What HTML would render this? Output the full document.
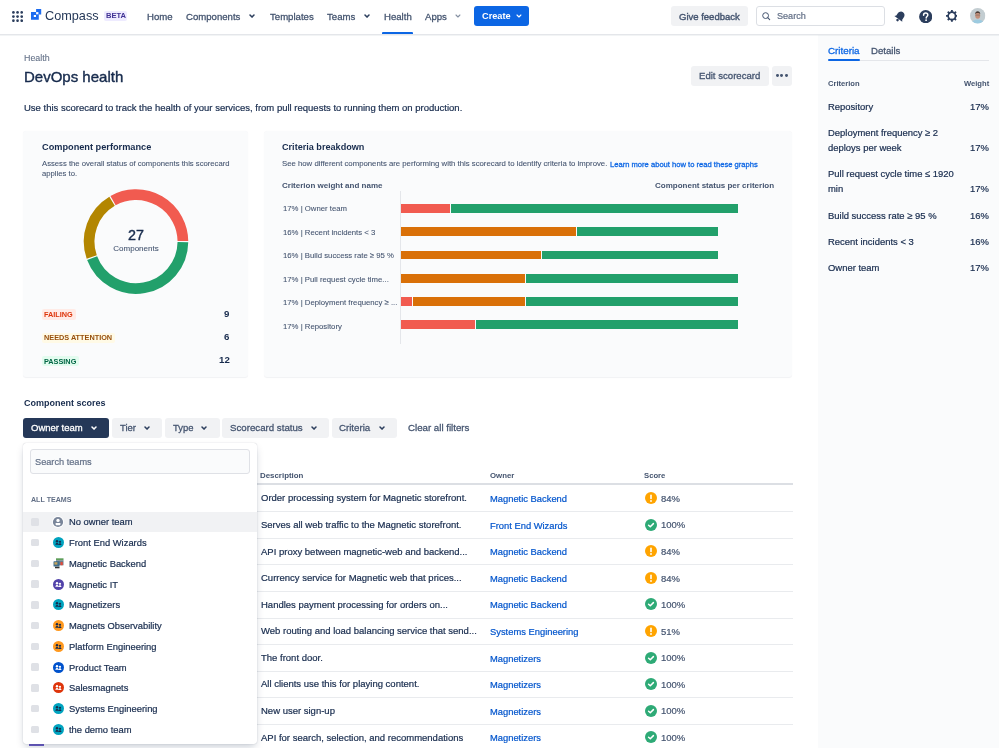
<!DOCTYPE html><html><head><meta charset="utf-8"><style>
html,body{margin:0;padding:0;}
body{width:999px;height:748px;overflow:hidden;position:relative;background:#fff;font-family:'Liberation Sans', sans-serif;}
.t{position:absolute;white-space:nowrap;line-height:1;will-change:transform;}
.r{position:absolute;}
</style></head><body>
<div class="r" style="left:818.00px;top:35.00px;width:181.00px;height:713.00px;background:#FAFBFC;"></div>
<div class="r" style="left:0.00px;top:0.00px;width:999.00px;height:34.00px;background:#fff;"></div>
<div class="r" style="left:0.00px;top:34.00px;width:999.00px;height:1.00px;background:#E4E6EA;"></div>
<div class="r" style="left:0.00px;top:35.00px;width:999.00px;height:1.00px;background:rgba(9,30,66,0.05);"></div>
<svg class="r" style="left:11.6px;top:10.9px" width="11" height="11"><circle cx="1.40" cy="1.40" r="1.35" fill="#2C3E5D"/><circle cx="1.40" cy="5.55" r="1.35" fill="#2C3E5D"/><circle cx="1.40" cy="9.70" r="1.35" fill="#2C3E5D"/><circle cx="5.55" cy="1.40" r="1.35" fill="#2C3E5D"/><circle cx="5.55" cy="5.55" r="1.35" fill="#2C3E5D"/><circle cx="5.55" cy="9.70" r="1.35" fill="#2C3E5D"/><circle cx="9.70" cy="1.40" r="1.35" fill="#2C3E5D"/><circle cx="9.70" cy="5.55" r="1.35" fill="#2C3E5D"/><circle cx="9.70" cy="9.70" r="1.35" fill="#2C3E5D"/></svg>
<svg class="r" style="left:31px;top:9px" width="11" height="11" viewBox="0 0 11 11"><path fill="#1D6CF0" fill-rule="evenodd" d="M0 3.1H7.8V10.7H0Z M2.8 6V8H5V6Z"/><path fill="#1D6CF0" fill-rule="evenodd" d="M5.1 0H10.2V5.4H5.1Z M5.1 3.1V5.4H7.8V3.1Z"/><rect x="5.1" y="3.1" width="2.2" height="2.2" fill="#fff"/></svg>
<div class="t" style="left:44.60px;top:9.65px;font-size:12.7px;color:#253858;">Compass</div>
<div class="r" style="left:103.70px;top:11.20px;width:23.50px;height:9.80px;background:#EEEBFF;border-radius:2px;"></div>
<div class="t" style="left:-184.30px;width:600px;text-align:center;top:12.47px;font-size:7.6px;color:#403294;font-weight:700;">BETA</div>
<div class="t" style="left:147.30px;top:11.97px;font-size:9.6px;color:#44546F;-webkit-text-stroke:0.28px #44546F;">Home</div>
<div class="t" style="left:185.50px;top:11.97px;font-size:9.6px;color:#44546F;-webkit-text-stroke:0.28px #44546F;">Components</div>
<svg class="r" style="left:249.40px;top:14.35px" width="6.00" height="4.10"><polyline points="1,1 3.00,3.10 5.00,1" fill="none" stroke="#2C3E5D" stroke-width="1.5" stroke-linecap="round" stroke-linejoin="round"/></svg>
<div class="t" style="left:269.80px;top:11.97px;font-size:9.6px;color:#44546F;-webkit-text-stroke:0.28px #44546F;">Templates</div>
<div class="t" style="left:327.30px;top:11.97px;font-size:9.6px;color:#44546F;-webkit-text-stroke:0.28px #44546F;">Teams</div>
<svg class="r" style="left:363.80px;top:14.35px" width="6.00" height="4.10"><polyline points="1,1 3.00,3.10 5.00,1" fill="none" stroke="#2C3E5D" stroke-width="1.5" stroke-linecap="round" stroke-linejoin="round"/></svg>
<div class="t" style="left:384.00px;top:11.97px;font-size:9.6px;color:#44546F;-webkit-text-stroke:0.28px #44546F;">Health</div>
<div class="r" style="left:382.30px;top:32.00px;width:30.70px;height:2.00px;background:#0C66E4;border-radius:1px 1px 0 0;"></div>
<div class="t" style="left:424.80px;top:11.97px;font-size:9.6px;color:#44546F;-webkit-text-stroke:0.28px #44546F;">Apps</div>
<svg class="r" style="left:455.25px;top:14.40px" width="5.90" height="4.00"><polyline points="1,1 2.95,3.00 4.90,1" fill="none" stroke="#8590A2" stroke-width="1.1" stroke-linecap="round" stroke-linejoin="round"/></svg>
<div class="r" style="left:473.80px;top:6.00px;width:55.30px;height:20.40px;background:#0C66E4;border-radius:3px;"></div>
<div class="t" style="left:481.50px;top:12.31px;font-size:9.2px;color:#fff;font-weight:700;">Create</div>
<svg class="r" style="left:516.15px;top:14.40px" width="5.90" height="4.00"><polyline points="1,1 2.95,3.00 4.90,1" fill="none" stroke="#fff" stroke-width="1.1" stroke-linecap="round" stroke-linejoin="round"/></svg>
<div class="r" style="left:671.00px;top:6.00px;width:77.00px;height:20.40px;background:#F1F2F4;border-radius:3px;"></div>
<div class="t" style="left:679.00px;top:12.06px;font-size:9.5px;color:#44546F;-webkit-text-stroke:0.4px #44546F;">Give feedback</div>
<div class="r" style="left:756.2px;top:6px;width:126.8px;height:18.4px;border:1px solid #DCDFE4;border-radius:3px;background:#fff"></div>
<svg class="r" style="left:762px;top:11.6px" width="9" height="9"><circle cx="3.6" cy="3.6" r="2.9" fill="none" stroke="#44546F" stroke-width="1"/><line x1="5.7" y1="5.7" x2="7.7" y2="7.7" stroke="#44546F" stroke-width="1.05" stroke-linecap="round"/></svg>
<div class="t" style="left:776.60px;top:12.40px;font-size:9.1px;color:#626F86;-webkit-text-stroke:0.2px #626F86;">Search</div>
<svg class="r" style="left:893px;top:10px" width="14" height="13" viewBox="0 0 14 13"><g transform="rotate(35 7 6.5)"><path d="M7 1.2c-2.3 0-3.6 1.8-3.6 4v2.6L2.2 9.4h9.6L10.6 7.8V5.2c0-2.2-1.3-4-3.6-4z" fill="#2C3E5D"/><circle cx="7" cy="10.8" r="1.3" fill="#2C3E5D"/></g></svg>
<svg class="r" style="left:918.9px;top:9.6px" width="13.4" height="13.4" viewBox="0 0 13.4 13.4"><circle cx="6.7" cy="6.7" r="6.6" fill="#2C3E5D"/><path d="M4.6 5.2c0-1.2 1-2.1 2.1-2.1s2.1.8 2.1 2c0 1.4-1.6 1.5-1.6 2.8" fill="none" stroke="#fff" stroke-width="1.5" stroke-linecap="round"/><circle cx="7.1" cy="10.2" r="0.9" fill="#fff"/></svg>
<svg class="r" style="left:945.6px;top:10.3px" width="11.8" height="11.8" viewBox="0 0 11.8 11.8"><rect x="4.95" y="0" width="1.9" height="3" rx="0.3" transform="rotate(0 5.9 5.9)" fill="#2C3E5D"/><rect x="4.95" y="0" width="1.9" height="3" rx="0.3" transform="rotate(45 5.9 5.9)" fill="#2C3E5D"/><rect x="4.95" y="0" width="1.9" height="3" rx="0.3" transform="rotate(90 5.9 5.9)" fill="#2C3E5D"/><rect x="4.95" y="0" width="1.9" height="3" rx="0.3" transform="rotate(135 5.9 5.9)" fill="#2C3E5D"/><rect x="4.95" y="0" width="1.9" height="3" rx="0.3" transform="rotate(180 5.9 5.9)" fill="#2C3E5D"/><rect x="4.95" y="0" width="1.9" height="3" rx="0.3" transform="rotate(225 5.9 5.9)" fill="#2C3E5D"/><rect x="4.95" y="0" width="1.9" height="3" rx="0.3" transform="rotate(270 5.9 5.9)" fill="#2C3E5D"/><rect x="4.95" y="0" width="1.9" height="3" rx="0.3" transform="rotate(315 5.9 5.9)" fill="#2C3E5D"/><circle cx="5.9" cy="5.9" r="3.75" fill="none" stroke="#2C3E5D" stroke-width="1.65"/></svg>
<svg class="r" style="left:970.2px;top:8.4px" width="15.4" height="15.4" viewBox="0 0 16 16"><defs><clipPath id="av"><circle cx="8" cy="8" r="8"/></clipPath></defs><g clip-path="url(#av)"><rect width="16" height="16" fill="#C3CDD1"/><ellipse cx="8" cy="16.5" rx="6.5" ry="4.5" fill="#9DCBE0"/><ellipse cx="8" cy="7.8" rx="2.6" ry="3.3" fill="#C4907A"/><path d="M5.3 6.6c0-2.3 1.2-3.3 2.7-3.3s2.7 1 2.7 3.3c-.6-1-1.5-1.4-2.7-1.4s-2.1.4-2.7 1.4z" fill="#4A3A32"/><rect x="5.6" y="7" width="4.8" height="0.7" fill="#555" opacity="0.6"/></g></svg>
<div class="t" style="left:23.60px;top:53.77px;font-size:8.9px;color:#626F86;-webkit-text-stroke:0.08px #626F86;">Health</div>
<div class="t" style="left:23.60px;top:68.60px;font-size:15px;color:#172B4D;-webkit-text-stroke:0.4px #172B4D;">DevOps health</div>
<div class="r" style="left:691.30px;top:65.80px;width:77.30px;height:20.30px;background:#F1F2F4;border-radius:3px;"></div>
<div class="t" style="left:699.20px;top:71.17px;font-size:9.6px;color:#44546F;-webkit-text-stroke:0.28px #44546F;">Edit scorecard</div>
<div class="r" style="left:771.60px;top:65.80px;width:20.30px;height:20.30px;background:#F1F2F4;border-radius:3px;"></div>
<div class="r" style="left:775.90px;top:74px;width:2.9px;height:2.9px;border-radius:50%;background:#44546F"></div>
<div class="r" style="left:780.40px;top:74px;width:2.9px;height:2.9px;border-radius:50%;background:#44546F"></div>
<div class="r" style="left:784.90px;top:74px;width:2.9px;height:2.9px;border-radius:50%;background:#44546F"></div>
<div class="t" style="left:23.50px;top:103.36px;font-size:9.5px;color:#172B4D;-webkit-text-stroke:0.2px #172B4D;">Use this scorecard to track the health of your services, from pull requests to running them on production.</div>
<div class="r" style="left:23.00px;top:130.50px;width:225.00px;height:246.30px;background:#FAFBFC;border-radius:3px;box-shadow:0 0.5px 1px rgba(9,30,66,0.06);"></div>
<div class="t" style="left:41.70px;top:142.81px;font-size:9.2px;color:#172B4D;font-weight:700;">Component performance</div>
<div class="t" style="left:41.70px;top:160.08px;font-size:7.7px;color:#44546F;-webkit-text-stroke:0.08px #44546F;">Assess the overall status of components this scorecard</div>
<div class="t" style="left:41.70px;top:169.88px;font-size:7.7px;color:#44546F;-webkit-text-stroke:0.08px #44546F;">applies to.</div>
<svg class="r" style="left:0;top:0" width="260" height="380"><path d="M182.90 242.17 A46.9 46.9 0 0 1 92.13 258.18" fill="none" stroke="#22A06B" stroke-width="10.7"/><path d="M91.74 257.10 A46.9 46.9 0 0 1 112.06 201.27" fill="none" stroke="#B38600" stroke-width="10.7"/><path d="M113.05 200.70 A46.9 46.9 0 0 1 182.90 241.03" fill="none" stroke="#F15B50" stroke-width="10.7"/></svg>
<div class="t" style="left:-164.00px;width:600px;text-align:center;top:228.10px;font-size:14.3px;color:#172B4D;-webkit-text-stroke:0.4px #172B4D;">27</div>
<div class="t" style="left:-164.00px;width:600px;text-align:center;top:245.13px;font-size:8px;color:#44546F;-webkit-text-stroke:0.08px #44546F;">Components</div>
<div class="r" style="left:41.50px;top:309.30px;width:34.30px;height:10.40px;background:#FFEBE6;border-radius:2px;"></div>
<div class="t" style="left:44.30px;top:310.82px;font-size:7.3px;color:#DE350B;font-weight:700;">FAILING</div>
<div class="t" style="right:769.30px;top:309.29px;font-size:9.7px;color:#172B4D;font-weight:700;">9</div>
<div class="r" style="left:41.50px;top:332.90px;width:73.90px;height:10.10px;background:#FFFAE6;border-radius:2px;"></div>
<div class="t" style="left:44.30px;top:334.42px;font-size:7.3px;color:#974F0C;font-weight:700;">NEEDS ATTENTION</div>
<div class="t" style="right:769.30px;top:332.39px;font-size:9.7px;color:#172B4D;font-weight:700;">6</div>
<div class="r" style="left:41.50px;top:356.00px;width:37.60px;height:9.90px;background:#E3FCEF;border-radius:2px;"></div>
<div class="t" style="left:44.30px;top:357.52px;font-size:7.3px;color:#006644;font-weight:700;">PASSING</div>
<div class="t" style="right:769.30px;top:355.49px;font-size:9.7px;color:#172B4D;font-weight:700;">12</div>
<div class="r" style="left:264.00px;top:130.50px;width:527.60px;height:246.30px;background:#FAFBFC;border-radius:3px;box-shadow:0 0.5px 1px rgba(9,30,66,0.06);"></div>
<div class="t" style="left:282.20px;top:143.10px;font-size:9.1px;color:#172B4D;font-weight:700;">Criteria breakdown</div>
<div class="t" style="left:282.20px;top:160.41px;font-size:7.78px;color:#44546F;-webkit-text-stroke:0.08px #44546F;">See how different components are performing with this scorecard to identify criteria to improve.</div>
<div class="t" style="left:610.30px;top:160.57px;font-size:7.6px;color:#0C66E4;-webkit-text-stroke:0.28px #0C66E4;">Learn more about how to read these graphs</div>
<div class="t" style="left:282.20px;top:181.93px;font-size:8px;color:#44546F;font-weight:700;">Criterion weight and name</div>
<div class="t" style="right:225.20px;top:181.93px;font-size:8px;color:#44546F;font-weight:700;">Component status per criterion</div>
<div class="r" style="left:400.00px;top:190.80px;width:1.00px;height:153.20px;background:#E4E6EA;"></div>
<div class="t" style="left:282.60px;top:205.44px;font-size:7.75px;color:#44546F;-webkit-text-stroke:0.08px #44546F;">17% | Owner team</div>
<div class="r" style="left:401.00px;top:204.00px;width:49.20px;height:8.70px;background:#F15B50;"></div>
<div class="r" style="left:451.30px;top:204.00px;width:286.70px;height:8.70px;background:#22A06B;"></div>
<div class="t" style="left:282.60px;top:228.88px;font-size:7.75px;color:#44546F;-webkit-text-stroke:0.08px #44546F;">16% | Recent incidents &lt; 3</div>
<div class="r" style="left:401.00px;top:227.28px;width:175.20px;height:8.70px;background:#D97008;"></div>
<div class="r" style="left:577.30px;top:227.28px;width:140.70px;height:8.70px;background:#22A06B;"></div>
<div class="t" style="left:282.60px;top:252.32px;font-size:7.75px;color:#44546F;-webkit-text-stroke:0.08px #44546F;">16% | Build success rate ≥ 95 %</div>
<div class="r" style="left:401.00px;top:250.56px;width:140.10px;height:8.70px;background:#D97008;"></div>
<div class="r" style="left:542.20px;top:250.56px;width:175.80px;height:8.70px;background:#22A06B;"></div>
<div class="t" style="left:282.60px;top:275.76px;font-size:7.75px;color:#44546F;-webkit-text-stroke:0.08px #44546F;">17% | Pull request cycle time...</div>
<div class="r" style="left:401.00px;top:273.84px;width:124.10px;height:8.70px;background:#D97008;"></div>
<div class="r" style="left:526.20px;top:273.84px;width:211.80px;height:8.70px;background:#22A06B;"></div>
<div class="t" style="left:282.60px;top:299.20px;font-size:7.75px;color:#44546F;-webkit-text-stroke:0.08px #44546F;">17% | Deployment frequency ≥ ...</div>
<div class="r" style="left:401.00px;top:297.12px;width:11.20px;height:8.70px;background:#F15B50;"></div>
<div class="r" style="left:413.30px;top:297.12px;width:111.80px;height:8.70px;background:#D97008;"></div>
<div class="r" style="left:526.20px;top:297.12px;width:211.80px;height:8.70px;background:#22A06B;"></div>
<div class="t" style="left:282.60px;top:322.64px;font-size:7.75px;color:#44546F;-webkit-text-stroke:0.08px #44546F;">17% | Repository</div>
<div class="r" style="left:401.00px;top:320.40px;width:74.10px;height:8.70px;background:#F15B50;"></div>
<div class="r" style="left:476.20px;top:320.40px;width:261.80px;height:8.70px;background:#22A06B;"></div>
<div class="t" style="left:828.30px;top:45.50px;font-size:9.8px;color:#0C66E4;-webkit-text-stroke:0.28px #0C66E4;">Criteria</div>
<div class="t" style="left:870.60px;top:45.67px;font-size:9.6px;color:#44546F;-webkit-text-stroke:0.28px #44546F;">Details</div>
<div class="r" style="left:828.30px;top:60.00px;width:160.70px;height:1.00px;background:#E4E6EA;"></div>
<div class="r" style="left:828.30px;top:59.00px;width:31.50px;height:2.00px;background:#0C66E4;border-radius:1px;"></div>
<div class="t" style="left:828.30px;top:79.57px;font-size:7.6px;color:#44546F;font-weight:700;">Criterion</div>
<div class="t" style="right:10.00px;top:79.57px;font-size:7.6px;color:#44546F;font-weight:700;">Weight</div>
<div class="t" style="left:828.30px;top:102.00px;font-size:9.45px;color:#172B4D;-webkit-text-stroke:0.2px #172B4D;">Repository</div>
<div class="t" style="right:10.00px;top:102.00px;font-size:9.45px;color:#172B4D;-webkit-text-stroke:0.2px #172B4D;">17%</div>
<div class="t" style="left:828.30px;top:128.40px;font-size:9.45px;color:#172B4D;-webkit-text-stroke:0.2px #172B4D;">Deployment frequency ≥ 2</div>
<div class="t" style="left:828.30px;top:143.30px;font-size:9.45px;color:#172B4D;-webkit-text-stroke:0.2px #172B4D;">deploys per week</div>
<div class="t" style="right:10.00px;top:143.30px;font-size:9.45px;color:#172B4D;-webkit-text-stroke:0.2px #172B4D;">17%</div>
<div class="t" style="left:828.30px;top:169.20px;font-size:9.45px;color:#172B4D;-webkit-text-stroke:0.2px #172B4D;">Pull request cycle time ≤ 1920</div>
<div class="t" style="left:828.30px;top:184.10px;font-size:9.45px;color:#172B4D;-webkit-text-stroke:0.2px #172B4D;">min</div>
<div class="t" style="right:10.00px;top:184.10px;font-size:9.45px;color:#172B4D;-webkit-text-stroke:0.2px #172B4D;">17%</div>
<div class="t" style="left:828.30px;top:210.80px;font-size:9.45px;color:#172B4D;-webkit-text-stroke:0.2px #172B4D;">Build success rate ≥ 95 %</div>
<div class="t" style="right:10.00px;top:210.80px;font-size:9.45px;color:#172B4D;-webkit-text-stroke:0.2px #172B4D;">16%</div>
<div class="t" style="left:828.30px;top:236.50px;font-size:9.45px;color:#172B4D;-webkit-text-stroke:0.2px #172B4D;">Recent incidents &lt; 3</div>
<div class="t" style="right:10.00px;top:236.50px;font-size:9.45px;color:#172B4D;-webkit-text-stroke:0.2px #172B4D;">16%</div>
<div class="t" style="left:828.30px;top:262.60px;font-size:9.45px;color:#172B4D;-webkit-text-stroke:0.2px #172B4D;">Owner team</div>
<div class="t" style="right:10.00px;top:262.60px;font-size:9.45px;color:#172B4D;-webkit-text-stroke:0.2px #172B4D;">17%</div>
<div class="t" style="left:23.60px;top:398.88px;font-size:9.0px;color:#172B4D;font-weight:700;">Component scores</div>
<div class="r" style="left:23.40px;top:417.70px;width:85.60px;height:20.10px;background:#253858;border-radius:3px;"></div>
<div class="t" style="left:31.20px;top:423.06px;font-size:9.5px;color:#fff;-webkit-text-stroke:0.28px #fff;">Owner team</div>
<svg class="r" style="left:90.90px;top:425.95px" width="6.00" height="4.10"><polyline points="1,1 3.00,3.10 5.00,1" fill="none" stroke="#fff" stroke-width="1.5" stroke-linecap="round" stroke-linejoin="round"/></svg>
<div class="r" style="left:112.00px;top:417.70px;width:50.00px;height:19.90px;background:#F1F2F4;border-radius:3px;"></div>
<div class="t" style="left:120.00px;top:423.06px;font-size:9.5px;color:#44546F;-webkit-text-stroke:0.28px #44546F;">Tier</div>
<svg class="r" style="left:143.50px;top:425.95px" width="6.00" height="4.10"><polyline points="1,1 3.00,3.10 5.00,1" fill="none" stroke="#2C3E5D" stroke-width="1.5" stroke-linecap="round" stroke-linejoin="round"/></svg>
<div class="r" style="left:165.00px;top:417.70px;width:54.50px;height:19.90px;background:#F1F2F4;border-radius:3px;"></div>
<div class="t" style="left:173.00px;top:423.10px;font-size:9.45px;color:#44546F;-webkit-text-stroke:0.28px #44546F;">Type</div>
<svg class="r" style="left:201.20px;top:425.95px" width="6.00" height="4.10"><polyline points="1,1 3.00,3.10 5.00,1" fill="none" stroke="#2C3E5D" stroke-width="1.5" stroke-linecap="round" stroke-linejoin="round"/></svg>
<div class="r" style="left:222.10px;top:417.70px;width:106.50px;height:19.90px;background:#F1F2F4;border-radius:3px;"></div>
<div class="t" style="left:230.10px;top:422.89px;font-size:9.7px;color:#44546F;-webkit-text-stroke:0.28px #44546F;">Scorecard status</div>
<svg class="r" style="left:310.50px;top:425.95px" width="6.00" height="4.10"><polyline points="1,1 3.00,3.10 5.00,1" fill="none" stroke="#2C3E5D" stroke-width="1.5" stroke-linecap="round" stroke-linejoin="round"/></svg>
<div class="r" style="left:331.60px;top:417.70px;width:65.50px;height:19.90px;background:#F1F2F4;border-radius:3px;"></div>
<div class="t" style="left:339.40px;top:422.89px;font-size:9.7px;color:#44546F;-webkit-text-stroke:0.28px #44546F;">Criteria</div>
<svg class="r" style="left:378.50px;top:425.95px" width="6.00" height="4.10"><polyline points="1,1 3.00,3.10 5.00,1" fill="none" stroke="#2C3E5D" stroke-width="1.5" stroke-linecap="round" stroke-linejoin="round"/></svg>
<div class="t" style="left:407.50px;top:422.89px;font-size:9.7px;color:#44546F;-webkit-text-stroke:0.28px #44546F;">Clear all filters</div>
<div class="t" style="left:259.50px;top:471.81px;font-size:7.9px;color:#44546F;font-weight:700;">Description</div>
<div class="t" style="left:490.00px;top:471.90px;font-size:7.8px;color:#44546F;font-weight:700;">Owner</div>
<div class="t" style="left:643.90px;top:471.98px;font-size:7.7px;color:#44546F;font-weight:700;">Score</div>
<div class="r" style="left:23.00px;top:483.30px;width:769.50px;height:2.00px;background:#DCDFE4;"></div>
<div class="t" style="left:260.50px;top:493.36px;font-size:9.5px;color:#172B4D;-webkit-text-stroke:0.2px #172B4D;">Order processing system for Magnetic storefront.</div>
<div class="t" style="left:490.00px;top:495.17px;font-size:9.37px;color:#0055CC;-webkit-text-stroke:0.2px #0055CC;">Magnetic Backend</div>
<svg class="r" style="left:645.2px;top:492.10px" width="12" height="12"><circle cx="6" cy="6" r="6" fill="#FFA400"/><rect x="5.2" y="2.6" width="1.6" height="4.6" rx="0.8" fill="#fff"/><circle cx="6" cy="9" r="0.9" fill="#fff"/></svg>
<div class="t" style="left:661.40px;top:493.76px;font-size:9.5px;color:#44546F;-webkit-text-stroke:0.2px #44546F;">84%</div>
<div class="r" style="left:23.00px;top:511.30px;width:769.50px;height:1.00px;background:#E9EBEE;"></div>
<div class="t" style="left:260.50px;top:519.94px;font-size:9.5px;color:#172B4D;-webkit-text-stroke:0.2px #172B4D;">Serves all web traffic to the Magnetic storefront.</div>
<div class="t" style="left:490.00px;top:521.75px;font-size:9.37px;color:#0055CC;-webkit-text-stroke:0.2px #0055CC;">Front End Wizards</div>
<svg class="r" style="left:645.2px;top:518.68px" width="12" height="12"><circle cx="6" cy="6" r="6" fill="#2EAA76"/><polyline points="3.6,6.2 5.3,7.7 8.4,4.6" fill="none" stroke="#fff" stroke-width="1.5" stroke-linecap="round" stroke-linejoin="round"/></svg>
<div class="t" style="left:661.40px;top:520.34px;font-size:9.5px;color:#44546F;-webkit-text-stroke:0.2px #44546F;">100%</div>
<div class="r" style="left:23.00px;top:537.88px;width:769.50px;height:1.00px;background:#E9EBEE;"></div>
<div class="t" style="left:260.50px;top:546.52px;font-size:9.5px;color:#172B4D;-webkit-text-stroke:0.2px #172B4D;">API proxy between magnetic-web and backend...</div>
<div class="t" style="left:490.00px;top:548.33px;font-size:9.37px;color:#0055CC;-webkit-text-stroke:0.2px #0055CC;">Magnetic Backend</div>
<svg class="r" style="left:645.2px;top:545.26px" width="12" height="12"><circle cx="6" cy="6" r="6" fill="#FFA400"/><rect x="5.2" y="2.6" width="1.6" height="4.6" rx="0.8" fill="#fff"/><circle cx="6" cy="9" r="0.9" fill="#fff"/></svg>
<div class="t" style="left:661.40px;top:546.92px;font-size:9.5px;color:#44546F;-webkit-text-stroke:0.2px #44546F;">84%</div>
<div class="r" style="left:23.00px;top:564.46px;width:769.50px;height:1.00px;background:#E9EBEE;"></div>
<div class="t" style="left:260.50px;top:573.10px;font-size:9.5px;color:#172B4D;-webkit-text-stroke:0.2px #172B4D;">Currency service for Magnetic web that prices...</div>
<div class="t" style="left:490.00px;top:574.91px;font-size:9.37px;color:#0055CC;-webkit-text-stroke:0.2px #0055CC;">Magnetic Backend</div>
<svg class="r" style="left:645.2px;top:571.84px" width="12" height="12"><circle cx="6" cy="6" r="6" fill="#FFA400"/><rect x="5.2" y="2.6" width="1.6" height="4.6" rx="0.8" fill="#fff"/><circle cx="6" cy="9" r="0.9" fill="#fff"/></svg>
<div class="t" style="left:661.40px;top:573.50px;font-size:9.5px;color:#44546F;-webkit-text-stroke:0.2px #44546F;">84%</div>
<div class="r" style="left:23.00px;top:591.04px;width:769.50px;height:1.00px;background:#E9EBEE;"></div>
<div class="t" style="left:260.50px;top:599.68px;font-size:9.5px;color:#172B4D;-webkit-text-stroke:0.2px #172B4D;">Handles payment processing for orders on...</div>
<div class="t" style="left:490.00px;top:601.49px;font-size:9.37px;color:#0055CC;-webkit-text-stroke:0.2px #0055CC;">Magnetic Backend</div>
<svg class="r" style="left:645.2px;top:598.42px" width="12" height="12"><circle cx="6" cy="6" r="6" fill="#2EAA76"/><polyline points="3.6,6.2 5.3,7.7 8.4,4.6" fill="none" stroke="#fff" stroke-width="1.5" stroke-linecap="round" stroke-linejoin="round"/></svg>
<div class="t" style="left:661.40px;top:600.08px;font-size:9.5px;color:#44546F;-webkit-text-stroke:0.2px #44546F;">100%</div>
<div class="r" style="left:23.00px;top:617.62px;width:769.50px;height:1.00px;background:#E9EBEE;"></div>
<div class="t" style="left:260.50px;top:626.26px;font-size:9.5px;color:#172B4D;-webkit-text-stroke:0.2px #172B4D;">Web routing and load balancing service that send...</div>
<div class="t" style="left:490.00px;top:628.07px;font-size:9.37px;color:#0055CC;-webkit-text-stroke:0.2px #0055CC;">Systems Engineering</div>
<svg class="r" style="left:645.2px;top:625.00px" width="12" height="12"><circle cx="6" cy="6" r="6" fill="#FFA400"/><rect x="5.2" y="2.6" width="1.6" height="4.6" rx="0.8" fill="#fff"/><circle cx="6" cy="9" r="0.9" fill="#fff"/></svg>
<div class="t" style="left:661.40px;top:626.66px;font-size:9.5px;color:#44546F;-webkit-text-stroke:0.2px #44546F;">51%</div>
<div class="r" style="left:23.00px;top:644.20px;width:769.50px;height:1.00px;background:#E9EBEE;"></div>
<div class="t" style="left:260.50px;top:652.84px;font-size:9.5px;color:#172B4D;-webkit-text-stroke:0.2px #172B4D;">The front door.</div>
<div class="t" style="left:490.00px;top:654.65px;font-size:9.37px;color:#0055CC;-webkit-text-stroke:0.2px #0055CC;">Magnetizers</div>
<svg class="r" style="left:645.2px;top:651.58px" width="12" height="12"><circle cx="6" cy="6" r="6" fill="#2EAA76"/><polyline points="3.6,6.2 5.3,7.7 8.4,4.6" fill="none" stroke="#fff" stroke-width="1.5" stroke-linecap="round" stroke-linejoin="round"/></svg>
<div class="t" style="left:661.40px;top:653.24px;font-size:9.5px;color:#44546F;-webkit-text-stroke:0.2px #44546F;">100%</div>
<div class="r" style="left:23.00px;top:670.78px;width:769.50px;height:1.00px;background:#E9EBEE;"></div>
<div class="t" style="left:260.50px;top:679.42px;font-size:9.5px;color:#172B4D;-webkit-text-stroke:0.2px #172B4D;">All clients use this for playing content.</div>
<div class="t" style="left:490.00px;top:681.23px;font-size:9.37px;color:#0055CC;-webkit-text-stroke:0.2px #0055CC;">Magnetizers</div>
<svg class="r" style="left:645.2px;top:678.16px" width="12" height="12"><circle cx="6" cy="6" r="6" fill="#2EAA76"/><polyline points="3.6,6.2 5.3,7.7 8.4,4.6" fill="none" stroke="#fff" stroke-width="1.5" stroke-linecap="round" stroke-linejoin="round"/></svg>
<div class="t" style="left:661.40px;top:679.82px;font-size:9.5px;color:#44546F;-webkit-text-stroke:0.2px #44546F;">100%</div>
<div class="r" style="left:23.00px;top:697.36px;width:769.50px;height:1.00px;background:#E9EBEE;"></div>
<div class="t" style="left:260.50px;top:706.00px;font-size:9.5px;color:#172B4D;-webkit-text-stroke:0.2px #172B4D;">New user sign-up</div>
<div class="t" style="left:490.00px;top:707.81px;font-size:9.37px;color:#0055CC;-webkit-text-stroke:0.2px #0055CC;">Magnetizers</div>
<svg class="r" style="left:645.2px;top:704.74px" width="12" height="12"><circle cx="6" cy="6" r="6" fill="#2EAA76"/><polyline points="3.6,6.2 5.3,7.7 8.4,4.6" fill="none" stroke="#fff" stroke-width="1.5" stroke-linecap="round" stroke-linejoin="round"/></svg>
<div class="t" style="left:661.40px;top:706.40px;font-size:9.5px;color:#44546F;-webkit-text-stroke:0.2px #44546F;">100%</div>
<div class="r" style="left:23.00px;top:723.94px;width:769.50px;height:1.00px;background:#E9EBEE;"></div>
<div class="t" style="left:260.50px;top:732.58px;font-size:9.5px;color:#172B4D;-webkit-text-stroke:0.2px #172B4D;">API for search, selection, and recommendations</div>
<div class="t" style="left:490.00px;top:734.39px;font-size:9.37px;color:#0055CC;-webkit-text-stroke:0.2px #0055CC;">Magnetizers</div>
<svg class="r" style="left:645.2px;top:731.32px" width="12" height="12"><circle cx="6" cy="6" r="6" fill="#2EAA76"/><polyline points="3.6,6.2 5.3,7.7 8.4,4.6" fill="none" stroke="#fff" stroke-width="1.5" stroke-linecap="round" stroke-linejoin="round"/></svg>
<div class="t" style="left:661.40px;top:732.98px;font-size:9.5px;color:#44546F;-webkit-text-stroke:0.2px #44546F;">100%</div>
<div class="r" style="left:29.00px;top:743.50px;width:14.80px;height:2.00px;background:#6E5DC6;"></div>
<div class="r" style="left:23.3px;top:443.3px;width:233.7px;height:300.6px;background:#fff;border-radius:3px;box-shadow:0 4px 8px -2px rgba(9,30,66,0.25),0 0 1px rgba(9,30,66,0.31);"></div>
<div class="r" style="left:30.1px;top:449.3px;width:217.9px;height:22.7px;background:#FAFBFC;border:1px solid #DFE1E6;border-radius:3px;"></div>
<div class="t" style="left:35.30px;top:457.61px;font-size:9.2px;color:#626F86;-webkit-text-stroke:0.2px #626F86;">Search teams</div>
<div class="t" style="left:31.10px;top:497.49px;font-size:7.1px;color:#626F86;font-weight:700;">ALL TEAMS</div>
<div class="r" style="left:23.30px;top:511.50px;width:233.70px;height:20.70px;background:#F1F2F4;"></div>
<div class="r" style="left:31.10px;top:518.10px;width:7.80px;height:7.60px;background:#DFE1E6;border-radius:1.5px;"></div>
<svg class="r" style="left:52.3px;top:515.90px" width="12" height="12" viewBox="-0.5 -0.5 12 12"><circle cx="5.5" cy="5.5" r="6" fill="#fff"/><circle cx="5.5" cy="5.5" r="5.1" fill="#7A869A"/><circle cx="5.5" cy="3.9" r="1.65" fill="#fff"/><path d="M3.1 6.4h4.8v1.3c0 .6-.5 1.1-1.1 1.1H4.2c-.6 0-1.1-.5-1.1-1.1z" fill="#fff"/></svg>
<div class="t" style="left:68.60px;top:517.44px;font-size:9.4px;color:#172B4D;-webkit-text-stroke:0.2px #172B4D;">No owner team</div>
<div class="r" style="left:31.10px;top:538.84px;width:7.80px;height:7.60px;background:#DFE1E6;border-radius:1.5px;"></div>
<svg class="r" style="left:52.8px;top:537.14px" width="11" height="11" viewBox="0 0 11 11"><circle cx="5.5" cy="5.5" r="5.5" fill="#00A3BF"/><circle cx="4" cy="4.3" r="1.2" fill="#172B4D"/><circle cx="7" cy="4.8" r="1.1" fill="#172B4D"/><path d="M2.3 7.8c.2-1.3 .9-1.9 1.7-1.9s1.5.6 1.7 1.9z M5.5 7.9c.2-1.1 .8-1.6 1.5-1.6s1.3.5 1.5 1.6z" fill="#172B4D"/></svg>
<div class="t" style="left:68.60px;top:538.18px;font-size:9.4px;color:#172B4D;-webkit-text-stroke:0.2px #172B4D;">Front End Wizards</div>
<div class="r" style="left:31.10px;top:559.58px;width:7.80px;height:7.60px;background:#DFE1E6;border-radius:1.5px;"></div>
<svg class="r" style="left:52.8px;top:557.88px" width="11" height="11" viewBox="0 0 11 11"><rect x="3" y="0.3" width="7.5" height="2" fill="#5E9E5A"/><rect x="3" y="2.3" width="7.5" height="5" fill="#6D7F8C"/><rect x="0.5" y="3.3" width="6" height="5.2" rx="0.6" fill="#3E6E8E"/><rect x="1.4" y="4.2" width="3" height="2.4" fill="#C9A55A"/><rect x="7.5" y="4" width="2.2" height="3.2" rx="0.5" fill="#E5493A"/><rect x="2" y="8.7" width="4.5" height="1.6" fill="#333"/></svg>
<div class="t" style="left:68.60px;top:558.92px;font-size:9.4px;color:#172B4D;-webkit-text-stroke:0.2px #172B4D;">Magnetic Backend</div>
<div class="r" style="left:31.10px;top:580.32px;width:7.80px;height:7.60px;background:#DFE1E6;border-radius:1.5px;"></div>
<svg class="r" style="left:52.8px;top:578.62px" width="11" height="11" viewBox="0 0 11 11"><circle cx="5.5" cy="5.5" r="5.5" fill="#5243AA"/><circle cx="4" cy="4.3" r="1.2" fill="#fff"/><circle cx="7" cy="4.8" r="1.1" fill="#fff"/><path d="M2.3 7.8c.2-1.3 .9-1.9 1.7-1.9s1.5.6 1.7 1.9z M5.5 7.9c.2-1.1 .8-1.6 1.5-1.6s1.3.5 1.5 1.6z" fill="#fff"/></svg>
<div class="t" style="left:68.60px;top:579.66px;font-size:9.4px;color:#172B4D;-webkit-text-stroke:0.2px #172B4D;">Magnetic IT</div>
<div class="r" style="left:31.10px;top:601.06px;width:7.80px;height:7.60px;background:#DFE1E6;border-radius:1.5px;"></div>
<svg class="r" style="left:52.8px;top:599.36px" width="11" height="11" viewBox="0 0 11 11"><circle cx="5.5" cy="5.5" r="5.5" fill="#00A3BF"/><circle cx="4" cy="4.3" r="1.2" fill="#172B4D"/><circle cx="7" cy="4.8" r="1.1" fill="#172B4D"/><path d="M2.3 7.8c.2-1.3 .9-1.9 1.7-1.9s1.5.6 1.7 1.9z M5.5 7.9c.2-1.1 .8-1.6 1.5-1.6s1.3.5 1.5 1.6z" fill="#172B4D"/></svg>
<div class="t" style="left:68.60px;top:600.40px;font-size:9.4px;color:#172B4D;-webkit-text-stroke:0.2px #172B4D;">Magnetizers</div>
<div class="r" style="left:31.10px;top:621.80px;width:7.80px;height:7.60px;background:#DFE1E6;border-radius:1.5px;"></div>
<svg class="r" style="left:52.8px;top:620.10px" width="11" height="11" viewBox="0 0 11 11"><circle cx="5.5" cy="5.5" r="5.5" fill="#FF991F"/><circle cx="4" cy="4.3" r="1.2" fill="#172B4D"/><circle cx="7" cy="4.8" r="1.1" fill="#172B4D"/><path d="M2.3 7.8c.2-1.3 .9-1.9 1.7-1.9s1.5.6 1.7 1.9z M5.5 7.9c.2-1.1 .8-1.6 1.5-1.6s1.3.5 1.5 1.6z" fill="#172B4D"/></svg>
<div class="t" style="left:68.60px;top:621.14px;font-size:9.4px;color:#172B4D;-webkit-text-stroke:0.2px #172B4D;">Magnets Observability</div>
<div class="r" style="left:31.10px;top:642.54px;width:7.80px;height:7.60px;background:#DFE1E6;border-radius:1.5px;"></div>
<svg class="r" style="left:52.8px;top:640.84px" width="11" height="11" viewBox="0 0 11 11"><circle cx="5.5" cy="5.5" r="5.5" fill="#FF991F"/><circle cx="4" cy="4.3" r="1.2" fill="#172B4D"/><circle cx="7" cy="4.8" r="1.1" fill="#172B4D"/><path d="M2.3 7.8c.2-1.3 .9-1.9 1.7-1.9s1.5.6 1.7 1.9z M5.5 7.9c.2-1.1 .8-1.6 1.5-1.6s1.3.5 1.5 1.6z" fill="#172B4D"/></svg>
<div class="t" style="left:68.60px;top:641.88px;font-size:9.4px;color:#172B4D;-webkit-text-stroke:0.2px #172B4D;">Platform Engineering</div>
<div class="r" style="left:31.10px;top:663.28px;width:7.80px;height:7.60px;background:#DFE1E6;border-radius:1.5px;"></div>
<svg class="r" style="left:52.8px;top:661.58px" width="11" height="11" viewBox="0 0 11 11"><circle cx="5.5" cy="5.5" r="5.5" fill="#0052CC"/><circle cx="4" cy="4.3" r="1.2" fill="#fff"/><circle cx="7" cy="4.8" r="1.1" fill="#fff"/><path d="M2.3 7.8c.2-1.3 .9-1.9 1.7-1.9s1.5.6 1.7 1.9z M5.5 7.9c.2-1.1 .8-1.6 1.5-1.6s1.3.5 1.5 1.6z" fill="#fff"/></svg>
<div class="t" style="left:68.60px;top:662.62px;font-size:9.4px;color:#172B4D;-webkit-text-stroke:0.2px #172B4D;">Product Team</div>
<div class="r" style="left:31.10px;top:684.02px;width:7.80px;height:7.60px;background:#DFE1E6;border-radius:1.5px;"></div>
<svg class="r" style="left:52.8px;top:682.32px" width="11" height="11" viewBox="0 0 11 11"><circle cx="5.5" cy="5.5" r="5.5" fill="#DE350B"/><circle cx="4" cy="4.3" r="1.2" fill="#fff"/><circle cx="7" cy="4.8" r="1.1" fill="#fff"/><path d="M2.3 7.8c.2-1.3 .9-1.9 1.7-1.9s1.5.6 1.7 1.9z M5.5 7.9c.2-1.1 .8-1.6 1.5-1.6s1.3.5 1.5 1.6z" fill="#fff"/></svg>
<div class="t" style="left:68.60px;top:683.36px;font-size:9.4px;color:#172B4D;-webkit-text-stroke:0.2px #172B4D;">Salesmagnets</div>
<div class="r" style="left:31.10px;top:704.76px;width:7.80px;height:7.60px;background:#DFE1E6;border-radius:1.5px;"></div>
<svg class="r" style="left:52.8px;top:703.06px" width="11" height="11" viewBox="0 0 11 11"><circle cx="5.5" cy="5.5" r="5.5" fill="#00A3BF"/><circle cx="4" cy="4.3" r="1.2" fill="#172B4D"/><circle cx="7" cy="4.8" r="1.1" fill="#172B4D"/><path d="M2.3 7.8c.2-1.3 .9-1.9 1.7-1.9s1.5.6 1.7 1.9z M5.5 7.9c.2-1.1 .8-1.6 1.5-1.6s1.3.5 1.5 1.6z" fill="#172B4D"/></svg>
<div class="t" style="left:68.60px;top:704.10px;font-size:9.4px;color:#172B4D;-webkit-text-stroke:0.2px #172B4D;">Systems Engineering</div>
<div class="r" style="left:31.10px;top:725.50px;width:7.80px;height:7.60px;background:#DFE1E6;border-radius:1.5px;"></div>
<svg class="r" style="left:52.8px;top:723.80px" width="11" height="11" viewBox="0 0 11 11"><circle cx="5.5" cy="5.5" r="5.5" fill="#00A3BF"/><circle cx="4" cy="4.3" r="1.2" fill="#172B4D"/><circle cx="7" cy="4.8" r="1.1" fill="#172B4D"/><path d="M2.3 7.8c.2-1.3 .9-1.9 1.7-1.9s1.5.6 1.7 1.9z M5.5 7.9c.2-1.1 .8-1.6 1.5-1.6s1.3.5 1.5 1.6z" fill="#172B4D"/></svg>
<div class="t" style="left:68.60px;top:724.84px;font-size:9.4px;color:#172B4D;-webkit-text-stroke:0.2px #172B4D;">the demo team</div>
</body></html>
